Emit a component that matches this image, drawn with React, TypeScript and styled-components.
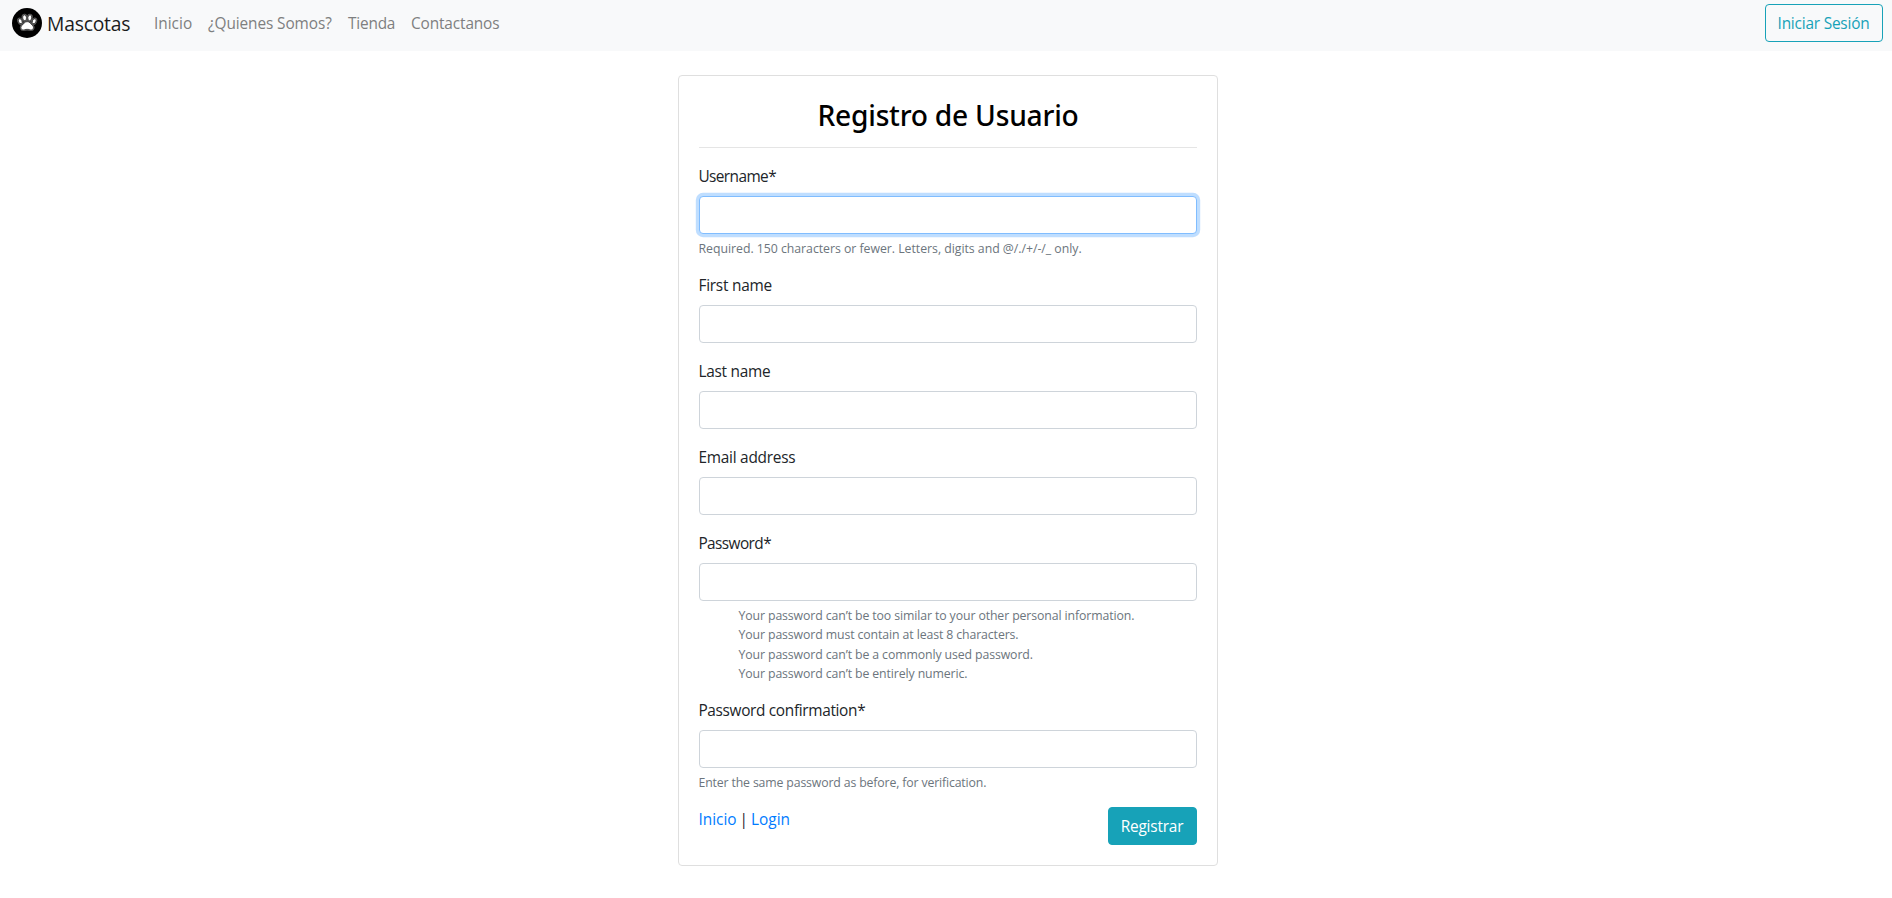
import React from 'react';
import styled, { createGlobalStyle } from 'styled-components';

const GlobalStyle = createGlobalStyle`
  *, *::before, *::after { box-sizing: border-box; }
  body {
    margin: 0;
    background: #fff;
    color: #212529;
    font-family: 'Segoe UI', 'Open Sans', 'Noto Sans', sans-serif;
    font-size: 15.4px;
    line-height: 24px;
    overflow: hidden;
  }
  a { text-decoration: none; }
`;

const Navbar = styled.nav`
  display: flex;
  align-items: flex-start;
  height: 51px;
  padding: 4px 9px 0 12px;
  background: #f8f9fa;
`;

const Brand = styled.a`
  display: flex;
  align-items: center;
  gap: 5px;
  height: 38px;
  width: 135px;
  color: #1b1c1d;
  font-size: 19.3px;
  letter-spacing: -0.2px;
`;

const BrandName = styled.span`
  padding-top: 2px;
`;

const Logo = styled.svg`
  display: block;
  width: 30px;
  height: 30px;
`;

const NavLinks = styled.div`
  display: flex;
  flex: 1;
`;

const NavLink = styled.a<{ $spacing: number; $width: number }>`
  width: ${(p) => p.$width}px;
  padding: 8px 7px;
  color: #7e7f80;
  letter-spacing: ${(p) => p.$spacing}px;
  white-space: nowrap;
`;

const Button = styled.button<{ $outline?: boolean; $width: number }>`
  width: ${(p) => p.$width}px;
  height: 38px;
  padding: 2px 1px 0 0;
  border: 1px solid #17a2b8;
  border-radius: 4px;
  background: ${(p) => (p.$outline ? 'transparent' : '#17a2b8')};
  color: ${(p) => (p.$outline ? '#17a2b8' : '#fff')};
  font: inherit;
  line-height: 24px;
  letter-spacing: -0.2px;
`;

const Card = styled.main`
  width: 540px;
  margin: 24px 0 0 678px;
  padding: 20px;
  border: 1px solid #dfdfdf;
  border-radius: 4px;
`;

const Title = styled.h2`
  margin: 0;
  height: 51px;
  border-bottom: 1px solid #e5e5e5;
  box-sizing: content-box;
  color: #000;
  font-family: 'Noto Sans', sans-serif;
  font-size: 28.2px;
  font-weight: 500;
  line-height: 39px;
  letter-spacing: -0.24px;
  text-align: center;
`;

const Form = styled.form`
  padding-top: 16px;
`;

const Field = styled.div`
  margin-bottom: 16px;
`;

const Label = styled.label<{ $spacing: number }>`
  display: block;
  margin-left: -0.6px;
  padding-top: 1px;
  margin-bottom: 7px;
  letter-spacing: ${(p) => p.$spacing}px;
`;

const Input = styled.input<{ $active?: boolean }>`
  display: block;
  width: 100%;
  height: 38px;
  padding: 6px 12px;
  border: 1px solid ${(p) => (p.$active ? '#80bdff' : '#ced4da')};
  border-radius: 4px;
  background: #fff;
  outline: 0;
  box-shadow: ${(p) => (p.$active ? '0 0 0 3.2px rgba(0, 123, 255, 0.25)' : 'none')};
`;

const Help = styled.small<{ $spacing: number }>`
  display: block;
  margin: 5px 0 -1px -0.5px;
  color: #6c757d;
  font-size: 12.3px;
  line-height: 19.2px;
  letter-spacing: ${(p) => p.$spacing}px;
`;

const HelpList = styled.ul`
  margin: 0;
  padding-left: 40px;
  list-style: none;
`;

const Footer = styled.div`
  display: flex;
  justify-content: space-between;
  align-items: flex-start;
`;

const FooterLinks = styled.span`
  margin-left: -0.6px;
  padding-top: 1px;
  word-spacing: -1px;
`;

const TextLink = styled.a`
  color: #007bff;
`;

const PASSWORD_RULES = [
  'Your password can’t be too similar to your other personal information.',
  'Your password must contain at least 8 characters.',
  'Your password can’t be a commonly used password.',
  'Your password can’t be entirely numeric.',
];

function PawLogo() {
  const paw = (
    <>
      <ellipse cx="8.2" cy="13.2" rx="1.75" ry="2.6" transform="rotate(-24 8.2 13.2)" />
      <ellipse cx="12.6" cy="9.8" rx="1.9" ry="2.9" transform="rotate(-6 12.6 9.8)" />
      <ellipse cx="17.8" cy="9.8" rx="1.9" ry="2.9" transform="rotate(6 17.8 9.8)" />
      <ellipse cx="22.2" cy="13.2" rx="1.75" ry="2.6" transform="rotate(24 22.2 13.2)" />
      <path d="M15.2 13.7c-2.6 0-3.4 2-4.7 3.2-1.2 1-1.9 2.2-1.4 3.5.6 1.5 2.1 1.7 3.5 1.3 1.7-.5 3.5-.5 5.2 0 1.4.4 2.9.2 3.5-1.3.5-1.3-.2-2.5-1.4-3.5-1.3-1.2-2.1-3.2-4.7-3.2Z" />
    </>
  );
  return (
    <Logo viewBox="0 0 30 30" aria-hidden="true">
      <circle cx="15" cy="15" r="15" fill="#000" />
      <g fill="#777" stroke="#777" strokeWidth="2.2" opacity="0.8">{paw}</g>
      <g fill="#fff" stroke="#111" strokeWidth="0.6">{paw}</g>
    </Logo>
  );
}

export default function App() {
  return (
    <>
      <GlobalStyle />
      <Navbar>
        <Brand href="#"><PawLogo /><BrandName>Mascotas</BrandName></Brand>
        <NavLinks>
          <NavLink href="#" $width={54} $spacing={0}>Inicio</NavLink>
          <NavLink href="#" $width={140} $spacing={-0.1}>¿Quienes Somos?</NavLink>
          <NavLink href="#" $width={63} $spacing={-0.2}>Tienda</NavLink>
          <NavLink href="#" $width={104} $spacing={-0.13}>Contactanos</NavLink>
        </NavLinks>
        <Button $outline $width={118}>Iniciar Sesión</Button>
      </Navbar>
      <Card>
        <Title>Registro de Usuario</Title>
        <Form onSubmit={(e) => e.preventDefault()}>
          <Field>
            <Label htmlFor="username" $spacing={-0.58}>Username*</Label>
            <Input id="username" $active />
            <Help $spacing={-0.03}>Required. 150 characters or fewer. Letters, digits and @/./+/-/_ only.</Help>
          </Field>
          <Field>
            <Label htmlFor="first" $spacing={-0.22}>First name</Label>
            <Input id="first" />
          </Field>
          <Field>
            <Label htmlFor="last" $spacing={-0.26}>Last name</Label>
            <Input id="last" />
          </Field>
          <Field>
            <Label htmlFor="email" $spacing={-0.24}>Email address</Label>
            <Input id="email" type="email" />
          </Field>
          <Field>
            <Label htmlFor="password" $spacing={-0.58}>Password*</Label>
            <Input id="password" type="password" />
            <Help as="div" $spacing={-0.11}>
              <HelpList>
                {PASSWORD_RULES.map((rule) => <li key={rule}>{rule}</li>)}
              </HelpList>
            </Help>
          </Field>
          <Field>
            <Label htmlFor="confirm" $spacing={-0.33}>Password confirmation*</Label>
            <Input id="confirm" type="password" />
            <Help $spacing={-0.15}>Enter the same password as before, for verification.</Help>
          </Field>
          <Footer>
            <FooterLinks><TextLink href="#">Inicio</TextLink> | <TextLink href="#">Login</TextLink></FooterLinks>
            <Button type="submit" $width={89}>Registrar</Button>
          </Footer>
        </Form>
      </Card>
    </>
  );
}
